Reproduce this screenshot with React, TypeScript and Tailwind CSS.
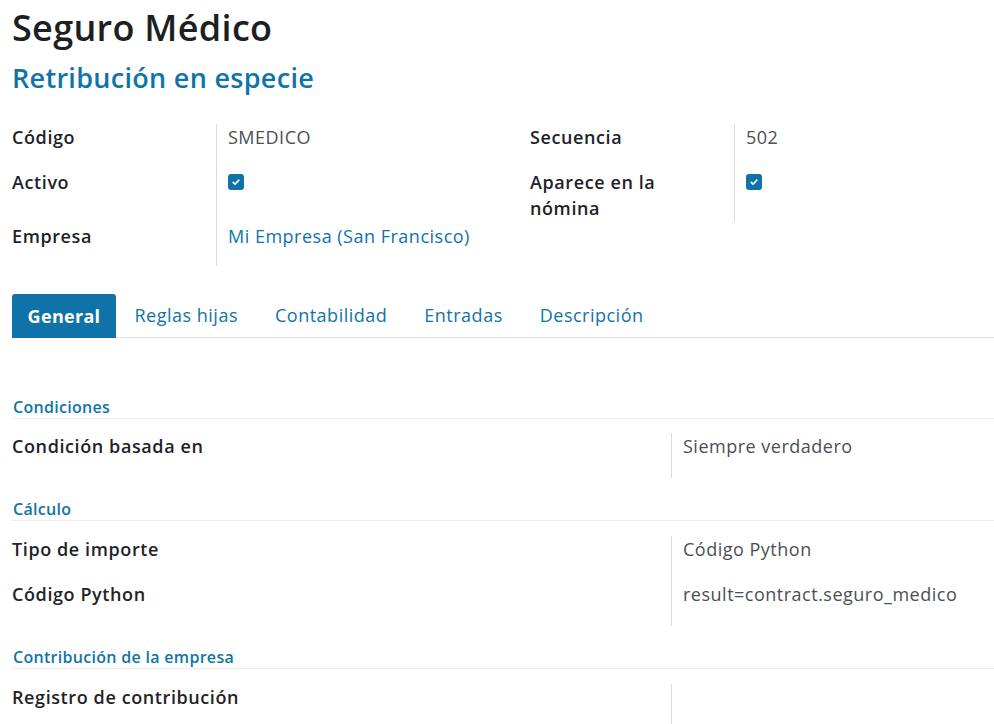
const BLUE = "text-[#0f74a9]";

function Check() {
  return (
    <span className="mt-[5px] flex h-4 w-4 items-center justify-center rounded-[3px] bg-[#0f72a8]">
      <svg viewBox="0 0 16 16" className="h-[10px] w-[10px]" fill="none" stroke="white" strokeWidth="2.6" strokeLinecap="round" strokeLinejoin="round">
        <path d="M3.5 8.5l3 3 6-6.5" />
      </svg>
    </span>
  );
}

function Row({ label, h, labelW, children }: { label: React.ReactNode; h: string; labelW: string; children?: React.ReactNode }) {
  return (
    <div className={`flex ${h}`}>
      <div className={`${labelW} shrink-0 pr-3 text-[18px] font-semibold leading-[26px] tracking-[0.6px] text-[#1f2328]`}>{label}</div>
      <div className="flex-1 border-l border-[#d8dadd] pl-[11px] text-[18px] leading-[26px] tracking-[0.5px] text-[#4a4f55]">{children}</div>
    </div>
  );
}

function SectionHeader({ title }: { title: string }) {
  return (
    <div className={`border-b border-[#eceef0] pl-px text-[16px] font-semibold leading-[22px] tracking-[0.3px] ${BLUE}`}>{title}</div>
  );
}

export default function App() {
  const tabs = ["Reglas hijas", "Contabilidad", "Entradas", "Descripción"];
  return (
    <div className="h-[724px] w-[994px] overflow-hidden bg-white pl-3 font-['Open_Sans',sans-serif]">
      <h1 className="pt-[7px] text-[36px] font-semibold leading-[42px] tracking-[0.3px] text-[#1d1f22]">Seguro Médico</h1>
      <h2 className={`mt-[13px] text-[27px] font-semibold leading-[32px] tracking-[0.3px] ${BLUE}`}>Retribución en especie</h2>

      <div className="mt-[30px] grid grid-cols-[494px_1fr] gap-6">
        <div>
          <Row label="Código" h="h-[45px]" labelW="w-[204px]">SMEDICO</Row>
          <Row label="Activo" h="h-[54px]" labelW="w-[204px]"><Check /></Row>
          <Row label="Empresa" h="h-[43px]" labelW="w-[204px]">
            <span className={BLUE}>Mi Empresa (San Francisco)</span>
          </Row>
        </div>
        <div>
          <Row label="Secuencia" h="h-[45px]" labelW="w-[204px]">502</Row>
          <Row label={<>Aparece en la<br />nómina</>} h="h-[53px]" labelW="w-[204px]"><Check /></Row>
        </div>
      </div>

      <div className="mt-[28px] flex border-b border-[#dee2e6]">
        <div className="-mb-px flex h-[44px] w-[104px] items-center justify-center rounded-t-[3px] bg-[#0f72a8] text-[18px] font-bold tracking-[0.3px] text-white">General</div>
        {tabs.map((t) => (
          <div key={t} className={`flex h-[43px] items-center px-[18.5px] text-[18px] tracking-[0.5px] ${BLUE}`}>{t}</div>
        ))}
      </div>

      <div className="mt-[58px]">
        <SectionHeader title="Condiciones" />
        <div className="mt-[14px]">
          <Row label="Condición basada en" h="h-[45px]" labelW="w-[659px]">Siempre verdadero</Row>
        </div>

        <div className="mt-[20px]">
          <SectionHeader title="Cálculo" />
        </div>
        <div className="mt-[15px]">
          <Row label="Tipo de importe" h="h-[45px]" labelW="w-[659px]">Código Python</Row>
          <Row label="Código Python" h="h-[45px]" labelW="w-[659px]">result=contract.seguro_medico</Row>
        </div>

        <div className="mt-[20px]">
          <SectionHeader title="Contribución de la empresa" />
        </div>
        <div className="mt-[15px]">
          <Row label="Registro de contribución" h="h-[45px]" labelW="w-[659px]" />
        </div>
      </div>
    </div>
  );
}
